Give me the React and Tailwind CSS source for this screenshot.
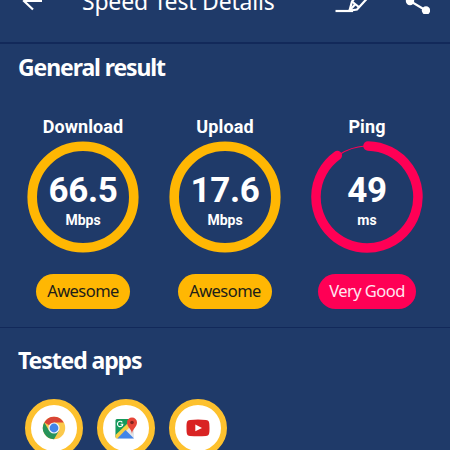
import React from "react";

const results = [
  { title: "Download", value: "66.5", unit: "Mbps", rating: "Awesome" },
  { title: "Upload", value: "17.6", unit: "Mbps", rating: "Awesome" },
  { title: "Ping", value: "49", unit: "ms", rating: "Very Good", partial: true },
];

function Ring({ partial }) {
  return (
    <svg viewBox="0 0 112 112" className="col-start-1 row-start-1 h-[112px] w-[112px]" fill="none">
      {partial ? (
        <>
          <path d="M28.5 13.5Q40 6 54 5" stroke="#ff0055" strokeWidth="1.2" />
          <path
            d="M57 5A51 51 0 1 1 26.3 14.5"
            stroke="#ff0055"
            strokeWidth="9.5"
            strokeLinecap="round"
          />
        </>
      ) : (
        <circle cx="56" cy="56" r="50.8" stroke="#ffb703" strokeWidth="9.6" />
      )}
    </svg>
  );
}

function Result({ title, value, unit, rating, partial }) {
  return (
    <div className="flex w-[142px] flex-col items-center">
      <h3 className="h-[24px] font-['Roboto',sans-serif] text-[18px] leading-[24px] font-bold tracking-[0.1px] text-white">
        {title}
      </h3>
      <div className="mt-[2px] grid place-items-center">
        <Ring partial={partial} />
        <div className="col-start-1 row-start-1 flex flex-col items-center pt-[7px] font-['Roboto',sans-serif] font-bold text-white">
          <span className="text-[35px] leading-[38px] tracking-[-0.3px]">{value}</span>
          <span className="mt-px text-[14px] leading-[18px]">{unit}</span>
        </div>
      </div>
      <div
        className={`mt-[21px] flex h-[35px] items-center justify-center rounded-full pb-px font-['Noto_Sans',sans-serif] text-[16.5px] tracking-[-0.55px] ${
          partial ? "w-[98px] bg-[#ff0055] text-[#ffe6f0]" : "w-[94px] bg-[#ffb703] text-[#211d19]"
        }`}
      >
        {rating}
      </div>
    </div>
  );
}

function ChromeIcon() {
  return (
    <svg viewBox="0 0 24 24" className="h-6 w-6">
      <circle cx="12" cy="12" r="11.2" fill="#fbc94b" />
      <path d="M12 12L2.3 6.4A11.2 11.2 0 0 1 21.7 6.4H12Z" fill="#d84437" />
      <path d="M2.3 6.4A11.2 11.2 0 0 0 12 23.2L16.9 14.8L12 12L7.1 14.8Z" fill="#27935a" />
      <circle cx="12" cy="12" r="5.6" fill="#f4f6f8" />
      <circle cx="12" cy="12" r="4.4" fill="#4285e8" />
    </svg>
  );
}

function MapsIcon() {
  return (
    <svg viewBox="0 0 24 24" className="h-6 w-6">
      <rect x="1.5" y="3" width="18.5" height="19.5" rx="1.5" fill="#e4e6e8" />
      <path d="M3 3H16L15 10L1.5 21.5V4.5A1.5 1.5 0 0 1 3 3Z" fill="#15995b" />
      <path d="M1.5 19L14 7L17 10L4.5 22.5H3A1.5 1.5 0 0 1 1.5 21Z" fill="#f9cf45" />
      <path d="M11.5 14L20 22.5H3.3Z" fill="#4285e8" />
      <path
        d="M8.3 6.3A2.7 2.7 0 1 0 8.8 8.3H6.6"
        fill="none"
        stroke="white"
        strokeWidth="1.1"
      />
      <path d="M18 18C17.6 12.5 13 11 13 6.5A5 5 0 0 1 23 6.5C23 11 18.4 12.5 18 18Z" fill="#e64538" />
      <circle cx="18" cy="6.5" r="1.8" fill="#84241f" />
    </svg>
  );
}

function YoutubeIcon() {
  return (
    <svg viewBox="0 0 24 24" className="h-6 w-6">
      <path
        d="M4 3.9Q12 3.2 20 3.9C23 4.1 23.5 5.5 23.5 12S23 19.7 20 20Q12 20.7 4 20C1 19.7.5 18.5.5 12S1 4.1 4 3.9Z"
        fill="#d92323"
      />
      <path d="M9.3 8.4V15.3L16 11.9Z" fill="white" />
    </svg>
  );
}

function AppBadge({ children }) {
  return (
    <div className="flex h-[58px] w-[58px] items-center justify-center rounded-full border-[6px] border-[#fdc12e] bg-white">
      {children}
    </div>
  );
}

function Header() {
  return (
    <header className="-mt-[22px] flex h-[66px] shrink-0 items-start border-b-2 border-[#12295a] text-white">
      <svg viewBox="0 0 24 24" className="mt-[11px] ml-[20px] h-6 w-6 shrink-0" fill="none" stroke="currentColor" strokeWidth="2.2">
        <path d="M22 12H4M13 3.5L4 12L13 20.5" />
      </svg>
      <h1 className="mt-[7px] ml-[38px] w-[240px] shrink-0 font-['Noto_Sans',sans-serif] text-[23px] leading-[32px] tracking-[-0.2px] whitespace-nowrap">
        Speed Test Details
      </h1>
      {/* edit */}
      <svg viewBox="0 0 36 36" className="ml-[12px] h-9 w-9 shrink-0" fill="none" stroke="currentColor" strokeWidth="2.2">
        <path d="M1.5 33H19" />
        <path d="M15.5 32.6L18 23.5L30 9L39 14L23 31.5L15.5 32.6" />
        <path d="M18 23.5L25.5 29.5M15.5 32.5L21 26.5" />
      </svg>
      {/* share */}
      <svg viewBox="0 0 28 36" className="ml-[32px] h-9 w-7 shrink-0" fill="none" stroke="currentColor" strokeWidth="2.2">
        <path d="M24 13L8 23L24 32.5" />
        <circle cx="24" cy="13" r="4.2" fill="currentColor" stroke="none" />
        <circle cx="8" cy="23" r="4.2" fill="currentColor" stroke="none" />
        <circle cx="24" cy="32.5" r="4.2" fill="currentColor" stroke="none" />
      </svg>
    </header>
  );
}

export default function App() {
  return (
    <div className="flex h-[450px] w-[450px] flex-col overflow-hidden bg-[#1f3a69]">
      <Header />

      <section className="h-[284px] shrink-0 border-b border-[#12295a]">
        <h2 className="mt-[7px] ml-[18px] h-[32px] font-['Noto_Sans',sans-serif] text-[23px] leading-[32px] font-bold tracking-[-1.1px] text-white">
          General result
        </h2>
        <div className="mt-[32px] ml-[12px] flex">
          {results.map((r) => (
            <Result key={r.title} {...r} />
          ))}
        </div>
      </section>

      <section>
        <h2 className="mt-[16px] ml-[18px] h-[32px] font-['Noto_Sans',sans-serif] text-[23px] leading-[32px] font-bold tracking-[-1.1px] text-white">
          Tested apps
        </h2>
        <div className="mt-[23px] ml-[25px] flex gap-[14px]">
          <AppBadge>
            <ChromeIcon />
          </AppBadge>
          <AppBadge>
            <MapsIcon />
          </AppBadge>
          <AppBadge>
            <YoutubeIcon />
          </AppBadge>
        </div>
      </section>
    </div>
  );
}
